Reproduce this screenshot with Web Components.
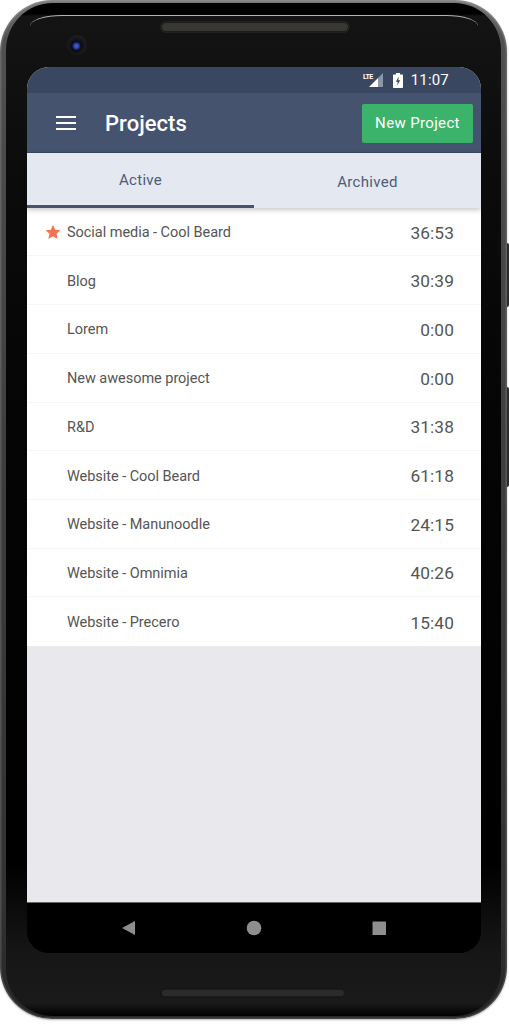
<!DOCTYPE html>
<html>
<head>
<meta charset="utf-8">
<title>Projects</title>
<style>
  html, body { margin: 0; background: #fff; }
  body { width: 509px; height: 1024px; overflow: hidden; font-family: Roboto, "Liberation Sans", sans-serif; }
</style>
</head>
<body>
<phone-frame>
  <status-bar time="11:07"></status-bar>
  <app-bar heading="Projects" action="New Project"></app-bar>
  <tab-strip first="Active" second="Archived"></tab-strip>
  <project-list>
    <project-row name="Social media - Cool Beard" time="36:53" starred></project-row>
    <project-row name="Blog" time="30:39"></project-row>
    <project-row name="Lorem" time="0:00"></project-row>
    <project-row name="New awesome project" time="0:00"></project-row>
    <project-row name="R&amp;D" time="31:38"></project-row>
    <project-row name="Website - Cool Beard" time="61:18"></project-row>
    <project-row name="Website - Manunoodle" time="24:15"></project-row>
    <project-row name="Website - Omnimia" time="40:26"></project-row>
    <project-row name="Website - Precero" time="15:40"></project-row>
  </project-list>
  <nav-keys slot="keys"></nav-keys>
</phone-frame>

<script>
class PhoneFrame extends HTMLElement {
  constructor() {
    super();
    this.attachShadow({ mode: "open" }).innerHTML = `
      <style>
        :host { display: block; position: relative; width: 509px; height: 1024px; }
        .side { position: absolute; left: 505px; width: 4px; background: #2e2e2e; border-radius: 0 2px 2px 0; }
        .body {
          position: absolute; left: 0; top: 0; width: 507px; height: 1019px;
          border-radius: 52px; background: linear-gradient(#7a7a7a 0, #505050 40px, #3c3c3c 500px, #323232 900px, #262626 100%);
          box-shadow: inset 0 0 0 1.5px rgba(255,255,255,.14), 0 1px 2px rgba(0,0,0,.3);
        }
        .bezel {
          position: absolute; left: 6px; right: 6px; top: 3px; bottom: 3px; border-radius: 47px;
          background: linear-gradient(#000 0, #000 11px, #141414 13px, #0b0b0b 180px, #050505 400px, #000 860px, #161616 950px, #1a1a1a 1000px, #000 100%);
        }
        .shine {
          position: absolute; left: 30px; right: 31px; top: 15px; height: 12px;
          border-top: 1px solid #b4b4b4; border-radius: 32px 32px 0 0 / 11px 11px 0 0;
        }
        .speaker { position: absolute; left: 161px; width: 188px; height: 10px; border-radius: 5px;
          background: #383734; border: 1px solid #1c1c1c; box-sizing: border-box; box-shadow: 0 0 0 1px #222; }
        .speaker.top { top: 22px; }
        .speaker.bottom { top: 989px; width: 184px; height: 8px; background: #2c2b29; box-shadow: 0 0 0 1px #161616; }
        .camera { position: absolute; left: 67px; top: 35px; width: 20px; height: 20px; border-radius: 50%;
          background: radial-gradient(circle at 47% 55%, #4a66e0 0, #2b3fa8 2.5px, #0a0c14 4.5px, #14151a 7px, #1c1d22 10px); }
        .inner { position: absolute; left: 27px; top: 67px; width: 454px; height: 886px; display: flex; flex-direction: column;
          background: #000; border-radius: 22px; overflow: hidden; }
        .screen { flex: 1; display: flex; flex-direction: column; background: #e9e8ed; min-height: 0; }
      </style>
      <div class="side" style="top:243px;height:64px"></div>
      <div class="side" style="top:387px;height:100px"></div>
      <div class="body"><div class="bezel"></div></div>
      <div class="shine"></div>
      <div class="speaker top"></div>
      <div class="speaker bottom"></div>
      <div class="camera"></div>
      <div class="inner">
        <div class="screen"><slot></slot></div>
        <slot name="keys"></slot>
      </div>`;
  }
}
customElements.define("phone-frame", PhoneFrame);

class StatusBar extends HTMLElement {
  connectedCallback() {
    this.attachShadow({ mode: "open" }).innerHTML = `
      <style>
        :host { display: flex; align-items: center; justify-content: flex-end; height: 26px; flex: none;
          padding-right: 32px; background: #3a4760; color: #fff; font-size: 15px; letter-spacing: .2px; }
        .lte { width: 21px; height: 16px; margin-right: 9px; }
        .bat { width: 10px; height: 15px; margin-right: 8px; }
      </style>
      <svg class="lte" viewBox="0 0 21 16">
        <path d="M20 1V15H15V6Z" fill="#8d96a8"/>
        <path d="M15 6V15H6Z" fill="#fff"/>
        <text x="0" y="7" font-family="Roboto" font-size="7" font-weight="700" fill="#fff" textLength="10.5">LTE</text>
      </svg>
      <svg class="bat" viewBox="0 0 10 15">
        <path d="M3 0H7V1.5H9.2A.8.8 0 0 1 10 2.3V14.2A.8.8 0 0 1 9.2 15H.8A.8.8 0 0 1 0 14.2V2.3A.8.8 0 0 1 .8 1.5H3Z" fill="#fff"/>
        <path d="M5.8 3.6L2.8 8.8H4.7L4.2 12.6L7.2 7.2H5.3Z" fill="#3a4760"/>
      </svg>
      <span>${this.getAttribute("time")}</span>`;
  }
}
customElements.define("status-bar", StatusBar);

class AppBar extends HTMLElement {
  connectedCallback() {
    this.attachShadow({ mode: "open" }).innerHTML = `
      <style>
        :host { display: flex; align-items: center; height: 60px; flex: none; box-sizing: border-box;
          padding: 1px 8px 0 29px; background: #46536f; color: #fff; border-bottom: 1px solid #3c4861; }
        svg { width: 20px; height: 14px; margin-right: 29px; }
        h1 { flex: 1; margin: 0; font-size: 22px; font-weight: 500; letter-spacing: .05px; }
        button { width: 111px; height: 39px; margin: 0; padding: 0; border: 0; border-radius: 2px; background: #3bb36a;
          color: #fff; font: 400 15px Roboto, sans-serif; letter-spacing: .35px; }
      </style>
      <svg viewBox="0 0 20 14"><path d="M0 0H20V2H0ZM0 6H20V8H0ZM0 12H20V14H0Z" fill="#fff"/></svg>
      <h1>${this.getAttribute("heading")}</h1>
      <button>${this.getAttribute("action")}</button>`;
  }
}
customElements.define("app-bar", AppBar);

class TabStrip extends HTMLElement {
  connectedCallback() {
    this.attachShadow({ mode: "open" }).innerHTML = `
      <style>
        :host { display: grid; grid-template-columns: 227px 227px; height: 54.75px; flex: none; position: relative; z-index: 1;
          background: #e4e8f0; color: #4f5c78; font-size: 15px; letter-spacing: .3px; box-shadow: 0 2px 5px rgba(0,0,0,.22); }
        div { display: flex; align-items: center; justify-content: center; box-sizing: border-box; }
        .on { padding-top: 2px; border-bottom: 3px solid #46536f; }
        .off { padding-top: 3px; }
      </style>
      <div class="on">${this.getAttribute("first")}</div>
      <div class="off">${this.getAttribute("second")}</div>`;
  }
}
customElements.define("tab-strip", TabStrip);

class ProjectList extends HTMLElement {
  constructor() {
    super();
    this.attachShadow({ mode: "open" }).innerHTML = `
      <style>:host { display: flex; flex-direction: column; flex: none; background: #fff; }</style>
      <slot></slot>`;
  }
}
customElements.define("project-list", ProjectList);

class ProjectRow extends HTMLElement {
  connectedCallback() {
    const star = this.hasAttribute("starred")
      ? `<svg class="star" viewBox="0 0 24 24"><path d="M12 1.2l3.3 7.3 7.9.9-5.9 5.3 1.6 7.8-6.9-4-6.9 4 1.6-7.8L.8 9.4l7.9-.9z" fill="#f4734f"/></svg>`
      : "";
    this.attachShadow({ mode: "open" }).innerHTML = `
      <style>
        :host { display: flex; align-items: center; position: relative; height: 48.7px; box-sizing: border-box;
          padding: 2px 27px 0 40px; border-bottom: 1px solid #f5f5f6; color: #555; }
        :host(:last-child) { border-bottom: 0; }
        .star { position: absolute; left: 18px; top: 16px; width: 16px; height: 16px; }
        .name { flex: 1; font-size: 14.5px; letter-spacing: -.04px; }
        .time { font-size: 17.3px; letter-spacing: .1px; }
      </style>
      ${star}
      <span class="name"></span>
      <span class="time">${this.getAttribute("time")}</span>`;
    this.shadowRoot.querySelector(".name").textContent = this.getAttribute("name");
  }
}
customElements.define("project-row", ProjectRow);

class NavKeys extends HTMLElement {
  constructor() {
    super();
    this.attachShadow({ mode: "open" }).innerHTML = `
      <style>
        :host { display: block; height: 51px; flex: none; background: #000; border-top: 1px solid #666; box-sizing: border-box; }
        svg { display: block; width: 454px; height: 50px; }
      </style>
      <svg viewBox="0 0 454 50">
        <path d="M95 25L108 18V32Z" fill="#8e8e8e"/>
        <circle cx="227" cy="25" r="7.3" fill="#8e8e8e"/>
        <rect x="345.5" y="18.5" width="13.5" height="13.5" rx=".6" fill="#8e8e8e"/>
      </svg>`;
  }
}
customElements.define("nav-keys", NavKeys);
</script>
</body>
</html>
